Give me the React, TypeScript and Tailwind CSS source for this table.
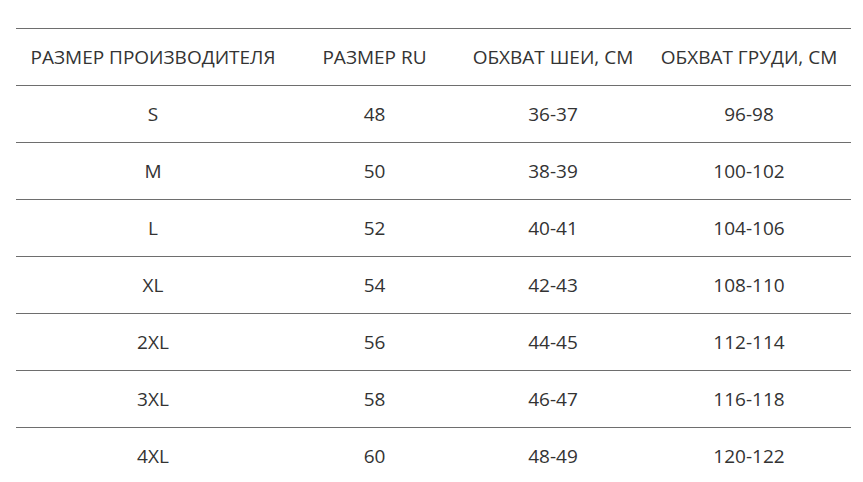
import React from 'react';

const headers = ['РАЗМЕР ПРОИЗВОДИТЕЛЯ', 'РАЗМЕР RU', 'ОБХВАТ ШЕИ, СМ', 'ОБХВАТ ГРУДИ, СМ'];

const rows: string[][] = [
    ['S', '48', '36-37', '96-98'],
    ['M', '50', '38-39', '100-102'],
    ['L', '52', '40-41', '104-106'],
    ['XL', '54', '42-43', '108-110'],
    ['2XL', '56', '44-45', '112-114'],
    ['3XL', '58', '46-47', '116-118'],
    ['4XL', '60', '48-49', '120-122'],
];

const colWidths = ['w-[274px]', 'w-[169px]', 'w-[188px]', 'w-[204px]'];

export default function App() {
    return (
        <div className="bg-white min-h-screen pt-[28px] pl-[16px] font-['Open_Sans',sans-serif] text-[#333]">
            <table className="w-[835px] table-fixed border-collapse text-[19px]">
                <colgroup>
                    {colWidths.map((w, i) => <col key={i} className={w} />)}
                </colgroup>
                <thead>
                    <tr className="border-t border-b border-[#6e6e6e]">
                        {headers.map(h => (
                            <th key={h} className="h-[57px] p-0 text-center font-normal">{h}</th>
                        ))}
                    </tr>
                </thead>
                <tbody>
                    {rows.map(r => (
                        <tr key={r[0]} className="border-b border-[#6e6e6e]">
                            {r.map((c, i) => (
                                <td key={i} className="h-[57px] p-0 text-center">{c}</td>
                            ))}
                        </tr>
                    ))}
                </tbody>
            </table>
        </div>
    );
}
